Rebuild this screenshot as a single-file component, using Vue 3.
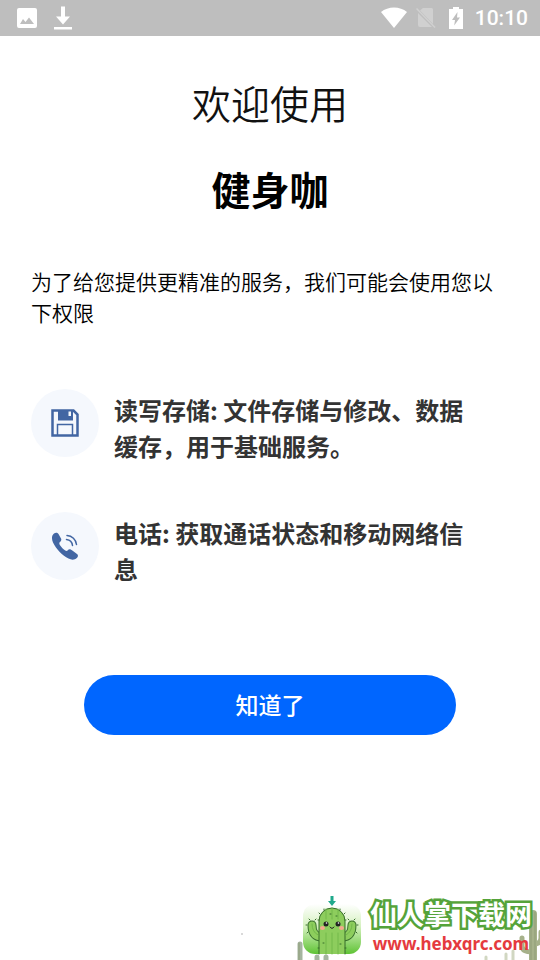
<script setup>
const permissions = [
  { id: 'storage', text: '读写存储: 文件存储与修改、数据缓存，用于基础服务。' },
  { id: 'phone', text: '电话: 获取通话状态和移动网络信息' },
]
</script>

<template>
  <div class="screen">
    <header class="status">
      <svg class="status-icon" viewBox="0 0 24 24" aria-hidden="true">
        <path fill="#fff" fill-rule="evenodd" d="M4 2h16a2 2 0 0 1 2 2v16a2 2 0 0 1-2 2H4a2 2 0 0 1-2-2V4a2 2 0 0 1 2-2zM5 18h14l-5-6.500-3.500 4.500-2.500-3z" />
      </svg>
      <svg class="status-icon" viewBox="0 0 24 24" aria-hidden="true">
        <path fill="#fff" d="M10 .5h4v10h5l-7 8-7-8h5zM3 21h18v2.500H3z" />
      </svg>
      <span class="spacer"></span>
      <svg class="wifi" viewBox="0 0 26 22" aria-hidden="true">
        <path fill="#fff" d="M13 21 0 5C7-1 19-1 26 5z" />
      </svg>
      <svg class="sim" viewBox="0 0 20 22" aria-hidden="true">
        <path fill="#d0d0d0" d="M7 1h8.500a1.500 1.500 0 0 1 1.500 1.500V17L4 3.500zM2 6l14 14H4a2 2 0 0 1-2-2z" />
        <path stroke="#d0d0d0" stroke-width="1.500" d="m.5 1.500 18.500 19" />
      </svg>
      <svg class="battery" viewBox="0 0 14 22" aria-hidden="true">
        <path fill="#fff" d="M4 0h6v2h4v20H0V2h4z" />
        <path fill="#bebebe" d="M8.500 5 3 13h3l-.8 5.500L11 10.500H8z" />
      </svg>
      <time class="clock">10:10</time>
    </header>

    <main class="content">
      <h1 class="title">
        <span class="welcome">欢迎使用</span>
        <span class="app-name">健身咖</span>
      </h1>
      <p class="intro">为了给您提供更精准的服务，我们可能会使用您以下权限</p>

      <ul class="permissions">
        <li v-for="item in permissions" :key="item.id" class="permission">
          <span class="badge">
            <svg v-if="item.id === 'storage'" class="glyph" viewBox="0 0 28 28" aria-hidden="true">
              <path fill="#f5f8fd" stroke="#4266a3" stroke-width="2.500" d="M1.500 1.500h21L26.500 5.500v21h-25z" />
              <path fill="#4266a3" d="M7 1h15v10.500H7z" />
              <path fill="#f5f8fd" d="M17.500 2.500H20V7h-2.500z" />
              <path fill="none" stroke="#4266a3" stroke-width="1.500" d="M6.500 27V15.500h15V27" />
            </svg>
            <svg v-else class="glyph" viewBox="0 0 28 28" aria-hidden="true">
              <path fill="#4266a3" d="M3 1.500C4.500.5 6.500.5 7.500 2L10 6.500c.7 1.300.2 2.500-1 3.500-1.200 1-.8 2.300 1 4.500s4 4.500 5.500 4.500c1 0 1.600-1.800 3-1.800 1 0 2 .6 3.500 1.700l4 3c1.500 1.100 1.100 2.900-.2 4.100-2.100 2.100-5.300 2.100-8.300.6C11.500 23.500 5.300 17.500 2 10.500.5 7 .5 3.500 3 1.500z" />
              <path fill="none" stroke="#4266a3" stroke-width="1.500" stroke-linecap="round" d="M16 3.500c5 .2 9 4 9.500 9M15.500 7.500c3.200.3 5.600 2.500 6 6" />
            </svg>
          </span>
          <p class="permission-text">{{ item.text }}</p>
        </li>
      </ul>

      <button class="confirm" type="button">知道了</button>
    </main>

    <footer class="footer">
      <svg class="scenery" viewBox="240 880 300 80" aria-hidden="true">
        <circle cx="242" cy="934" r="1" fill="#ccc" />
        <g fill="none" stroke-linecap="round">
          <path stroke="#a5b5a0" stroke-width="5" d="M300 944v20M317 957v8M326 957v8" />
          <path stroke="#a6b18a" stroke-width="8" d="M533 914v50" />
          <path stroke="#a6b18a" stroke-width="5" d="M522 938v8q0 6 11 6M541 932v6q0 6-8 6" />
          <path stroke="#d1d7c2" stroke-width="3" d="M486 957v8M506 954v8M513 951v12" />
          <path stroke="#8f9d76" stroke-width="1" d="M531 912v50M535 912v50M299 943v20" />
        </g>
      </svg>
      <a class="brand" href="#">
        <svg class="mascot" viewBox="0 0 60 60" aria-hidden="true">
          <defs>
            <linearGradient id="tile" x1="0" y1="0" x2="0" y2="1">
              <stop offset="0" stop-color="#fff" />
              <stop offset=".45" stop-color="#d5f1bf" />
              <stop offset="1" stop-color="#5fc335" />
            </linearGradient>
          </defs>
          <rect x="1" y="8" width="58" height="50" rx="12" fill="url(#tile)" />
          <path fill="#20a98b" d="M28.500 0h3v5H34l-4 5-4-5h2.500z" />
          <g stroke-linecap="round" stroke-linejoin="round">
            <path fill="none" stroke="#376d2b" stroke-width="9" d="M20 41q-10 0-10-12M40 41q10 0 10-12" />
            <path fill="none" stroke="#8dcd5d" stroke-width="7" d="M20 41q-10 0-10-12M40 41q10 0 10-12" />
            <path fill="#8dcd5d" stroke="#376d2b" d="M17 58V25a13 13 0 0 1 26 0v33" />
            <path fill="none" stroke="#72b94a" d="M24 13v10M24 37v21M30 12v11M30 37v21M36 13v10M36 37v21M10 28q0 8 6 11M50 28q0 8-6 11" />
            <path fill="none" stroke="#376d2b" d="m18 18-1-1M22 14v-1M38 14v-1M42 18l1-1M16 24h1M43 24h1M5 29H4M8 24l-1-1M13 24l1-1M47 24l-1-1M52 24l1-1M55 29h1M6 36l-1 1M54 36l1 1M16 52h1M43 52h1M21 47h1M38 48h1M28 18h1M34 20h1" />
          </g>
          <circle cx="24" cy="28" r="2.500" fill="#222" />
          <circle cx="36" cy="28" r="2.500" fill="#222" />
          <circle cx="24.500" cy="27" r=".8" fill="#fff" />
          <circle cx="36.500" cy="27" r=".8" fill="#fff" />
          <ellipse cx="20.500" cy="32" rx="2.500" ry="2" fill="#f4a98d" />
          <ellipse cx="39.500" cy="32" rx="2.500" ry="2" fill="#f4a98d" />
          <path fill="none" stroke="#222" stroke-linecap="round" d="M28 31q2 3 4 0" />
        </svg>
        <span class="brand-text">
          <span class="brand-name">仙人掌下载网</span>
          <span class="brand-url">www.hebxqrc.com</span>
        </span>
      </a>
    </footer>
  </div>
</template>

<style>
body {
  margin: 0;
  background: #fff;
}
</style>

<style scoped>
.screen {
  display: flex;
  flex-direction: column;
  min-height: 100vh;
  font-family: "Noto Sans CJK SC", sans-serif;
  color: #000;
}

.status {
  display: flex;
  align-items: center;
  box-sizing: border-box;
  height: 36px;
  padding: 0 12px 0 15px;
  background: #bebebe;
}

.status-icon {
  width: 24px;
  height: 24px;
  margin-right: 12px;
}

.spacer {
  flex: 1;
}

.wifi {
  width: 26px;
  height: 22px;
  margin-right: 9px;
}

.sim {
  width: 20px;
  height: 22px;
  margin-right: 13px;
}

.battery {
  width: 14px;
  height: 22px;
  margin-right: 12px;
}

.clock {
  font: 500 21px/36px Roboto, sans-serif;
  color: #fff;
}

.content {
  display: flex;
  flex-direction: column;
  padding: 37px 31px 0;
}

.title {
  display: flex;
  flex-direction: column;
  gap: 28px;
  margin: 0;
  text-align: center;
  font-size: 39px;
  line-height: 58px;
}

.welcome {
  font-weight: 350;
  color: #111;
}

.app-name {
  font-weight: 700;
}

.intro {
  margin: 49px 0 0;
  font-size: 21px;
  font-weight: 350;
  line-height: 31px;
}

.permissions {
  display: flex;
  flex-direction: column;
  gap: 48px;
  margin: 61px 0 0;
  padding: 0;
  list-style: none;
}

.permission {
  display: flex;
  align-items: flex-start;
  gap: 15px;
}

.badge {
  display: flex;
  flex: none;
  align-items: center;
  justify-content: center;
  width: 68px;
  height: 68px;
  border-radius: 50%;
  background: #f5f8fd;
}

.glyph {
  width: 28px;
  height: 28px;
}

.permission-text {
  flex: 1;
  margin: 0;
  padding: 3px 32px 0 0;
  font-size: 24px;
  font-weight: 700;
  line-height: 36px;
  color: #333;
}

.confirm {
  align-self: center;
  width: 78%;
  height: 60px;
  margin-top: 88px;
  padding: 0 0 2px;
  border: 0;
  border-radius: 30px;
  background: #0066ff;
  color: #fff;
  font-family: inherit;
  font-size: 23px;
  font-weight: 500;
}

.footer {
  position: relative;
  display: flex;
  justify-content: flex-end;
  margin-top: auto;
  padding: 0 8px 4px 0;
}

.scenery {
  position: absolute;
  right: 0;
  bottom: 0;
  width: 300px;
  height: 80px;
}

.brand {
  position: relative;
  display: flex;
  align-items: flex-end;
  gap: 8px;
  text-decoration: none;
}

.mascot {
  width: 60px;
  height: 60px;
}

.brand-text {
  display: flex;
  flex-direction: column;
  align-items: center;
  gap: 2px;
}

.brand-name {
  font-size: 27px;
  font-weight: 700;
  line-height: 32px;
  color: #fff;
  -webkit-text-stroke: 5px #55a33a;
  stroke-linejoin: round;
  paint-order: stroke fill;
}

.brand-url {
  font: 700 17px/24px "Noto Sans", sans-serif;
  color: #e53a3e;
}
</style>
